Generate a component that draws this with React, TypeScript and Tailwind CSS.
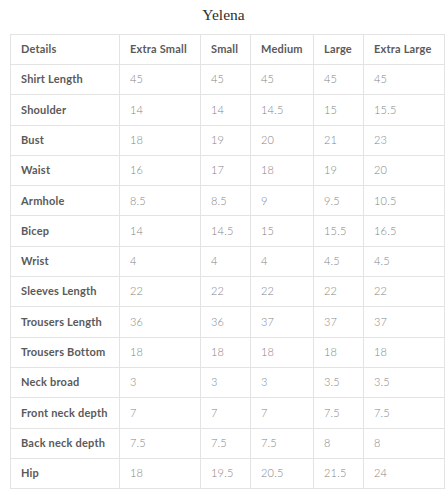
const sizes = ["Extra Small", "Small", "Medium", "Large", "Extra Large"];

const rows: [string, string[]][] = [
  ["Shirt Length", ["45", "45", "45", "45", "45"]],
  ["Shoulder", ["14", "14", "14.5", "15", "15.5"]],
  ["Bust", ["18", "19", "20", "21", "23"]],
  ["Waist", ["16", "17", "18", "19", "20"]],
  ["Armhole", ["8.5", "8.5", "9", "9.5", "10.5"]],
  ["Bicep", ["14", "14.5", "15", "15.5", "16.5"]],
  ["Wrist", ["4", "4", "4", "4.5", "4.5"]],
  ["Sleeves Length", ["22", "22", "22", "22", "22"]],
  ["Trousers Length", ["36", "36", "37", "37", "37"]],
  ["Trousers Bottom", ["18", "18", "18", "18", "18"]],
  ["Neck broad", ["3", "3", "3", "3.5", "3.5"]],
  ["Front neck depth", ["7", "7", "7", "7.5", "7.5"]],
  ["Back neck depth", ["7.5", "7.5", "7.5", "8", "8"]],
  ["Hip", ["18", "19.5", "20.5", "21.5", "24"]],
];

export default function App() {
  return (
    <div className="w-[447px] h-[503px] bg-white pt-[5px]">
      <h2 className="text-center text-[15.5px] leading-[20px] text-[#2e2e2e] font-['Liberation_Serif',serif] mb-[9px]">
        Yelena
      </h2>
      <table className="ml-[10px] w-[434px] table-fixed border-collapse font-['Lato',sans-serif] text-[11px] tracking-[0.2px]">
        <colgroup>
          <col className="w-[109px]" />
          <col className="w-[81px]" />
          <col className="w-[50px]" />
          <col className="w-[63px]" />
          <col className="w-[50px]" />
          <col className="w-[81px]" />
        </colgroup>
        <thead>
          <tr className="h-[30px]">
            <th className="border border-[#e3e3e3] text-left pl-[10px] font-bold text-[#5a5a5a]">Details</th>
            {sizes.map((s) => (
              <th key={s} className="border border-[#e3e3e3] text-left pl-[10px] font-bold text-[#5a5a5a] whitespace-nowrap">
                {s}
              </th>
            ))}
          </tr>
        </thead>
        <tbody>
          {rows.map(([name, vals]) => (
            <tr key={name} className="h-[30.3px]">
              <td className="border border-[#e3e3e3] pl-[10px] font-bold text-[#5a5a5a] whitespace-nowrap">{name}</td>
              {vals.map((v, i) => (
                <td key={i} className="border border-[#e3e3e3] pl-[10px] font-light text-[#858585]">
                  {v}
                </td>
              ))}
            </tr>
          ))}
        </tbody>
      </table>
    </div>
  );
}
